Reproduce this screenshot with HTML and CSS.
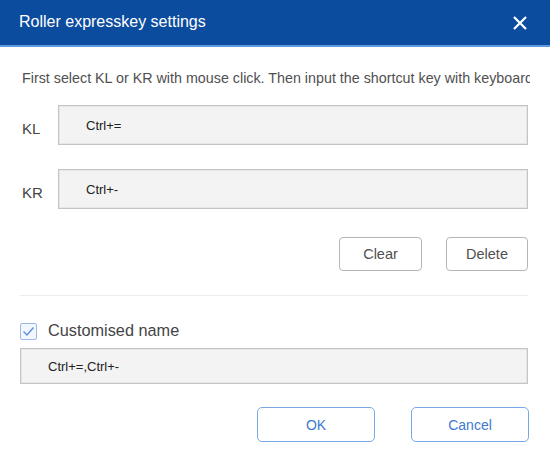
FILE: index.html
```html
<!DOCTYPE html>
<html>
<head>
<meta charset="utf-8">
<link rel="stylesheet" href="styles.css">
</head>
<body>
<div class="dialog">
  <div class="titlebar">
    <span class="title">Roller expresskey settings</span>
    <svg class="close" width="16" height="16" viewBox="0 0 16 16"><path d="M2 2 L14 14 M14 2 L2 14" stroke="#ffffff" stroke-width="2.2" fill="none"/></svg>
  </div>
  <div class="content">
    <div class="hint">First select KL or KR with mouse click. Then input the shortcut key with keyboard.</div>
    <div class="keyrow first">
      <span class="keylabel">KL</span>
      <div class="field key">Ctrl+=</div>
    </div>
    <div class="keyrow">
      <span class="keylabel">KR</span>
      <div class="field key">Ctrl+-</div>
    </div>
    <div class="actions">
      <button class="btn gray clear">Clear</button>
      <button class="btn gray delete">Delete</button>
    </div>
    <div class="divider"></div>
    <div class="checkrow">
      <span class="checkbox"><svg width="13" height="13" viewBox="0 0 13 13"><path d="M1.5 6.5 L5 10 L11.5 2.5" stroke="#5b8ee0" stroke-width="1.4" fill="none"/></svg></span>
      <span class="checklabel">Customised name</span>
    </div>
    <div class="field name">Ctrl+=,Ctrl+-</div>
    <div class="footer">
      <button class="btn blue">OK</button>
      <button class="btn blue">Cancel</button>
    </div>
  </div>
</div>
</body>
</html>
```
FILE: styles.css
```css
html, body {
  margin: 0;
  padding: 0;
  background: #ffffff;
  font-family: "Liberation Sans", Arial, sans-serif;
}
.dialog {
  width: 550px;
  height: 470px;
  overflow: hidden;
}
.titlebar {
  height: 45px;
  background: #0c4c9e;
  border-bottom: 2px solid #5f9ae0;
  display: flex;
  align-items: center;
  justify-content: space-between;
  padding: 0 22px 0 19px;
}
.title {
  color: #ffffff;
  font-size: 16px;
  padding-bottom: 1px;
}
.close {
  display: block;
}
.content {
  padding: 0 22px 0 20px;
}
.hint {
  margin-top: 23px;
  padding-left: 2px;
  font-size: 14.3px;
  line-height: 17px;
  color: #505050;
  white-space: nowrap;
  overflow: hidden;
  width: 508px;
}
.keyrow {
  display: flex;
  align-items: center;
  margin-top: 24px;
}
.keyrow.first {
  margin-top: 18px;
}
.keylabel {
  flex: 0 0 38px;
  padding-left: 2px;
  box-sizing: border-box;
  font-size: 15px;
  color: #444444;
  padding-top: 6px;
}
.field {
  box-sizing: border-box;
  background: #f3f3f3;
  border: 1px solid #c4c4c4;
  box-shadow: inset 0 0 0 1px #e6e6e6;
  font-size: 13px;
  color: #222222;
  display: flex;
  align-items: center;
  padding-left: 27px;
}
.field.key {
  flex: 1 1 auto;
  height: 40px;
}
.actions {
  display: flex;
  justify-content: flex-end;
  gap: 24px;
  margin-top: 28px;
}
.btn {
  font-family: "Liberation Sans", Arial, sans-serif;
  background: #ffffff;
  border-radius: 4px;
  height: 34px;
  font-size: 14px;
  padding: 0;
  cursor: pointer;
}
.btn.gray {
  border: 1px solid #b5b5b5;
  color: #505050;
  font-size: 14.5px;
}
.btn.clear {
  width: 83px;
}
.btn.delete {
  width: 82px;
}
.divider {
  height: 1px;
  background: #ececec;
  margin-top: 24px;
}
.checkrow {
  display: flex;
  align-items: center;
  margin-top: 24px;
  height: 20px;
}
.checkbox {
  box-sizing: border-box;
  width: 17px;
  height: 17px;
  border: 1px solid #9db8ea;
  background: #f2f6fd;
  border-radius: 2px;
  display: flex;
  align-items: center;
  justify-content: center;
  margin-top: 3px;
}
.checklabel {
  margin-left: 11px;
  font-size: 16.3px;
  color: #444444;
}
.field.name {
  margin-top: 8px;
  height: 36px;
}
.footer {
  display: flex;
  justify-content: flex-end;
  gap: 36px;
  margin-top: 23px;
  margin-right: -1px;
}
.btn.blue {
  width: 118px;
  height: 35px;
  border: 1px solid #78a8e6;
  border-radius: 5px;
  color: #3d7ad0;
}
```
